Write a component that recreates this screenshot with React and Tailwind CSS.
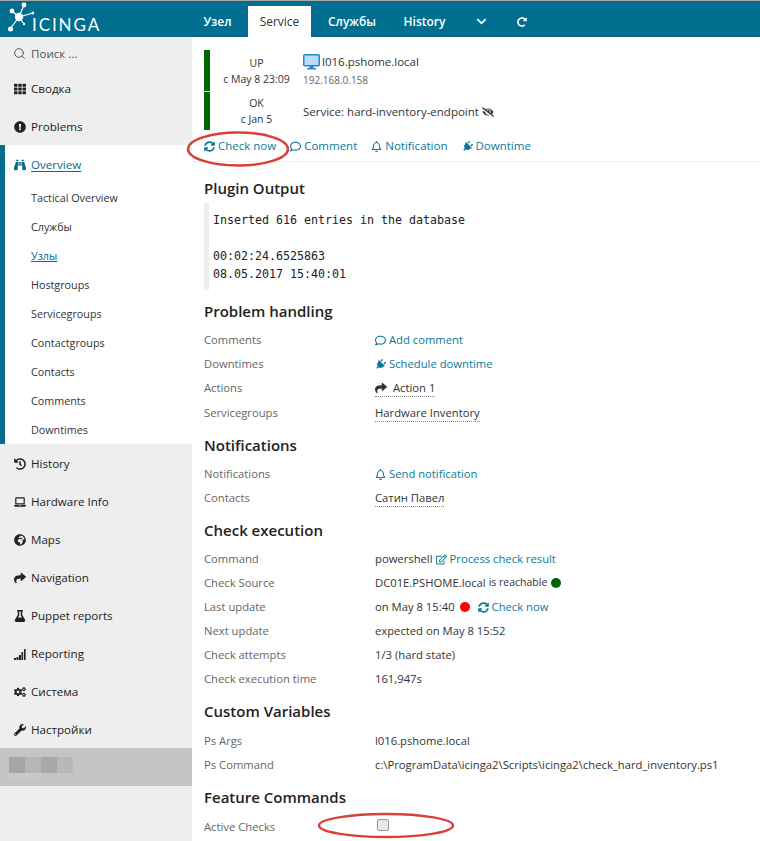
import { Search } from 'lucide-react'
import {
  FaTh, FaExclamationCircle, FaHistory, FaLaptop, FaGlobeAfrica, FaShare, FaFlask, FaCogs, FaWrench,
  FaBinoculars, FaChevronDown, FaPlug, FaRegComment, FaRegBell, FaSyncAlt, FaRegEdit, FaEyeSlash, FaRedoAlt,
} from 'react-icons/fa'

const SUB_NAV = ['Tactical Overview', 'Службы', 'Узлы', 'Hostgroups', 'Servicegroups', 'Contactgroups', 'Contacts', 'Comments', 'Downtimes']

const SignalIcon = () => (
  <svg width="12" height="12" viewBox="0 0 12 12" fill="currentColor">
    <rect x="0" y="10" width="2" height="2" />
    <rect x="2.5" y="9" width="2" height="3" />
    <rect x="5" y="7" width="2" height="5" />
    <rect x="7.5" y="4" width="1.6" height="8" />
    <rect x="10" y="1" width="1.6" height="11" />
  </svg>
)

const MonitorIcon = () => (
  <svg width="17" height="16" viewBox="0 0 17 16" className="shrink-0">
    <rect x="0.75" y="0.75" width="15.5" height="11" rx="1" fill="#bcdcf2" stroke="#1d87d4" strokeWidth="1.5" />
    <rect x="6.5" y="12" width="4" height="2" fill="#1d87d4" />
    <rect x="4" y="14" width="9" height="1.5" fill="#1d87d4" />
  </svg>
)

const BOTTOM_NAV = [
  { icon: FaHistory, label: 'History' },
  { icon: FaLaptop, label: 'Hardware Info' },
  { icon: FaGlobeAfrica, label: 'Maps' },
  { icon: FaShare, label: 'Navigation' },
  { icon: FaFlask, label: 'Puppet reports' },
  { icon: SignalIcon, label: 'Reporting' },
  { icon: FaCogs, label: 'Система' },
  { icon: FaWrench, label: 'Настройки' },
]

function Logo() {
  return (
    <div className="flex items-end w-[192px] h-full pl-[8px] pb-[3px]">
      <svg width="26" height="32" viewBox="0 0 26 32" className="shrink-0">
        <g stroke="#fff" strokeWidth="1.2">
          <line x1="11" y1="15" x2="16" y2="3" />
          <line x1="11" y1="15" x2="4" y2="9" />
          <line x1="11" y1="15" x2="2" y2="27" />
          <line x1="11" y1="15" x2="25" y2="11" />
          <line x1="11" y1="15" x2="16" y2="22" />
        </g>
        <g fill="#fff">
          <circle cx="11" cy="15" r="4.2" />
          <circle cx="16" cy="3" r="2.4" />
          <circle cx="4" cy="9" r="2.4" />
          <circle cx="2.5" cy="27" r="2.5" />
          <circle cx="25" cy="11" r="1.5" />
          <circle cx="16" cy="22" r="1.2" />
        </g>
      </svg>
      <span className="ml-[-2px] text-white text-[17px] leading-[18px] font-['Lato',sans-serif] tracking-[1.9px]">ICINGA</span>
    </div>
  )
}

function TopTab({ active, children, className = '' }) {
  return (
    <div className={`flex items-center justify-center h-[31px] text-[12px] ${active ? 'bg-white text-[#333] font-normal' : 'text-white font-semibold'} ${className}`}>
      {children}
    </div>
  )
}

function Header() {
  return (
    <header className="flex items-end h-[36px] bg-[#006e8f] shrink-0">
      <Logo />
      <TopTab className="w-[56px] pr-[5px]">Узел</TopTab>
      <TopTab active className="w-[63px]">Service</TopTab>
      <TopTab className="w-[82px]">Службы</TopTab>
      <TopTab className="w-[63px]">History</TopTab>
      <TopTab className="w-[50px]"><FaChevronDown size={11} /></TopTab>
      <TopTab className="w-[31px]"><FaRedoAlt size={10} /></TopTab>
    </header>
  )
}

function NavRow({ icon: Icon, label, active }) {
  return (
    <div className={`flex items-center h-[38px] pl-[14px] text-[11.6px] ${active ? 'text-[#006e8f]' : 'text-[#222]'}`}>
      <span className="w-[17px] shrink-0 flex">
        <Icon size={12} />
      </span>
      <span className={active ? 'underline underline-offset-2' : ''}>{label}</span>
    </div>
  )
}

function Sidebar() {
  return (
    <aside className="w-[192px] shrink-0 bg-[#eeeeee] flex flex-col">
      <div className="flex items-center h-[33px] pl-[13px] text-[11.6px] text-[#555]">
        <span className="w-[18px] shrink-0"><Search size={13} strokeWidth={1.75} /></span>
        Поиск ...
      </div>
      <NavRow icon={FaTh} label="Сводка" />
      <NavRow icon={FaExclamationCircle} label="Problems" />
      <div className="bg-white border-l-[5px] border-[#006e8f] mt-[-1px] pt-[1px] h-[299px]">
        <div className="ml-[-5px]"><NavRow icon={FaBinoculars} label="Overview" active /></div>
        {SUB_NAV.map(s => (
          <div key={s} className={`flex items-center h-[29px] pl-[26px] text-[10.75px] ${s === 'Узлы' ? 'underline text-[#006e8f]' : 'text-[#333]'}`}>
            {s}
          </div>
        ))}
      </div>
      <div className="h-[1px]" />
      {BOTTOM_NAV.map(n => <NavRow key={n.label} {...n} />)}
      <div className="h-[38px] bg-[#c4c4c4] mt-[-1px] pl-[9px] pt-[9px]">
        <div className="flex">
          <div className="w-[16px] h-[16px] bg-[#a6a6a6]" />
          <div className="w-[16px] h-[16px] bg-[#b6b6b6]" />
          <div className="w-[16px] h-[16px] bg-[#a8a8a8]" />
          <div className="w-[16px] h-[16px] bg-[#b8b8b8]" />
        </div>
        <div className="w-[32px] h-[6px] bg-[#c9c9c9]" />
      </div>
    </aside>
  )
}

function StateRow({ state, since, className = '', children }) {
  return (
    <div className={`flex ${className}`}>
      <div className="w-[6px] bg-[#006400]" />
      <div className="w-[93px] flex flex-col items-center justify-center text-[10.5px] leading-[16px] text-[#333]">
        <span>{state}</span>
        <span>{since}</span>
      </div>
      <div className="flex flex-col justify-center">{children}</div>
    </div>
  )
}

const Link = ({ icon: Icon, size = 11, iconClass = '', children, className = '' }) => (
  <span className={`inline-flex items-center gap-[3px] text-[#0a7a9a] ${className}`}>
    <Icon size={size} className={iconClass} />
    {children}
  </span>
)

const Dotted = ({ children }) => (
  <span className="flex items-center gap-[6px] border-b border-dotted border-[#888] pt-[1px] text-[#333]">{children}</span>
)

function H2({ children, className = '' }) {
  return <h2 className={`text-[15px] font-semibold leading-[20px] text-[#222] ${className}`}>{children}</h2>
}

function Row({ label, className = '', children }) {
  return (
    <div className={`flex items-center h-[24px] text-[11.25px] ${className}`}>
      <div className="w-[171px] shrink-0 text-[#666]">{label}</div>
      <div className="flex items-center text-[#333] whitespace-nowrap">{children}</div>
    </div>
  )
}

function Main() {
  return (
    <main className="flex-1 min-w-0 bg-white pl-[12px] overflow-hidden">
      <div className="pt-[13px] pb-[1px]">
        <StateRow state="UP" since="с May 8 23:09" className="h-[41px] mb-[1px]">
          <span className="flex items-center gap-[2px] text-[11.5px] leading-[18px] text-[#333]">
            <MonitorIcon />
            l016.pshome.local
          </span>
          <span className="text-[10px] leading-[18px] text-[#666]">192.168.0.158</span>
        </StateRow>
        <StateRow state="OK" since="с Jan 5" className="h-[38px]">
          <span className="flex items-center gap-[3px] text-[11.5px] text-[#333] pt-[1px]">
            Service: hard-inventory-endpoint
            <FaEyeSlash size={12} />
          </span>
        </StateRow>
      </div>
      <div className="ml-[-12px] pl-[12px] h-[31px] flex items-center gap-[14px] text-[11.5px] border-b border-[#eee]">
        <Link icon={FaSyncAlt}>Check now</Link>
        <Link icon={FaRegComment}>Comment</Link>
        <Link icon={FaRegBell}>Notification</Link>
        <Link icon={FaPlug} iconClass="rotate-45">Downtime</Link>
      </div>

      <H2 className="mt-[16px]">Plugin Output</H2>
      <pre className="mt-[5px] h-[87px] pl-[4px] pt-[8px] border-l-[5px] border-[#eeeeee] font-['DejaVu_Sans_Mono',monospace] text-[11.63px] leading-[18px] text-[#222]">
{`Inserted 616 entries in the database

00:02:24.6525863
08.05.2017 15:40:01`}
      </pre>

      <H2 className="mt-[11px] mb-[7px]">Problem handling</H2>
      <Row label="Comments"><Link icon={FaRegComment}>Add comment</Link></Row>
      <Row label="Downtimes"><Link icon={FaPlug} iconClass="rotate-45">Schedule downtime</Link></Row>
      <Row label="Actions" className="mb-[1px]">
        <Dotted><FaShare size={12} />Action 1</Dotted>
      </Row>
      <Row label="Servicegroups"><Dotted>Hardware Inventory</Dotted></Row>

      <H2 className="mt-[10px] mb-[7px]">Notifications</H2>
      <Row label="Notifications"><Link icon={FaRegBell}>Send notification</Link></Row>
      <Row label="Contacts"><Dotted>Сатин Павел</Dotted></Row>

      <H2 className="mt-[10px] mb-[7px]">Check execution</H2>
      <Row label="Command">
        powershell<Link icon={FaRegEdit} className="ml-[3px]">Process check result</Link>
      </Row>
      <Row label="Check Source">
        DC01E.PSHOME.local&nbsp;<span className="text-[10.5px]">is reachable</span>
        <span className="ml-[4px] w-[10px] h-[10px] rounded-full bg-[#006400]" />
      </Row>
      <Row label="Last update">
        on May 8 15:40
        <span className="ml-[5px] w-[10px] h-[10px] rounded-full bg-[#ff0000]" />
        <Link icon={FaSyncAlt} className="ml-[8px]">Check now</Link>
      </Row>
      <Row label="Next update">expected on May 8 15:52</Row>
      <Row label="Check attempts">1/3 (hard state)</Row>
      <Row label="Check execution time">161,947s</Row>

      <H2 className="mt-[10px] mb-[8px]">Custom Variables</H2>
      <Row label="Ps Args">l016.pshome.local</Row>
      <Row label="Ps Command">c:\ProgramData\icinga2\Scripts\icinga2\check_hard_inventory.ps1</Row>

      <H2 className="mt-[10px] mb-[8px]">Feature Commands</H2>
      <Row label="Active Checks">
        <input type="checkbox" className="w-[12px] h-[12px] ml-[2px] mt-[-4px] appearance-none rounded-[2px] border border-[#999] bg-[#e8e8e8]" />
      </Row>
    </main>
  )
}

export default function App() {
  return (
    <div className="relative w-[760px] h-[841px] overflow-hidden flex flex-col border-t border-[#aaa] font-['Open_Sans',sans-serif]">
      <Header />
      <div className="flex flex-1 min-h-0">
        <Sidebar />
        <Main />
      </div>
      {/* red annotation ellipses drawn over the screenshot */}
      <svg className="absolute left-0 top-0 pointer-events-none" width="760" height="841" fill="none" stroke="#d9403a" strokeWidth="2.5">
        <ellipse cx="238" cy="148" rx="50" ry="16.5" />
        <ellipse cx="386" cy="824.5" rx="67" ry="11.5" />
      </svg>
    </div>
  )
}
